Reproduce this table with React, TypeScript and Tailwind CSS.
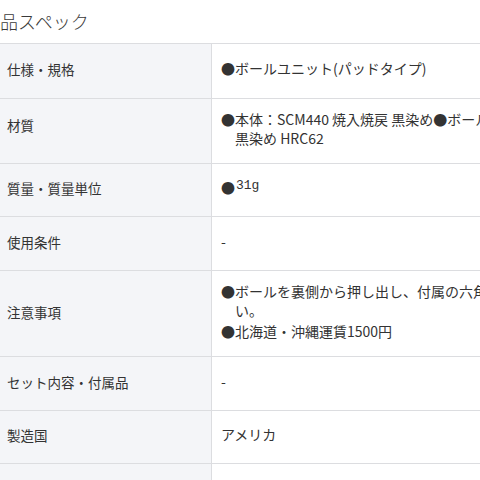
import React from "react";

const font = { fontFamily: '"Noto Sans CJK JP", "Noto Sans", sans-serif' };

function Row({
  label,
  children,
  h,
  lpb = "pb-[3px]",
}: {
  label: string;
  children: React.ReactNode;
  h: string;
  lpb?: string;
}) {
  return (
    <div className={`flex border-b border-[#dcdde0] ${h}`}>
      <div className={`w-[212px] shrink-0 bg-[#f4f5f8] border-r border-[#dcdde0] flex items-center pl-[7px] text-[13.5px] text-[#333] ${lpb}`}>
        {label}
      </div>
      <div className="flex-1 flex flex-col justify-center pl-[9px] pb-[5px] text-[14px] text-[#333] leading-[19px] whitespace-nowrap">
        {children}
      </div>
    </div>
  );
}

export default function App() {
  return (
    <div className="w-[480px] h-[480px] overflow-hidden bg-white" style={font}>
      <div className="w-[640px]">
        <div className="h-[43px] flex items-center -ml-[18px] text-[18px] text-[#3a3a3a] font-light">
          製品スペック
        </div>
        <div className="border-t border-[#dcdde0]">
          <Row label="仕様・規格" h="h-[55px]">
            <div>●ボールユニット(パッドタイプ)</div>
          </Row>
          <Row label="材質" h="h-[65px]" lpb="pb-[12px]">
            <div>●本体：SCM440 焼入焼戻 黒染め●ボール：SUJ2 焼入焼戻</div>
            <div className="pl-[14px]">黒染め HRC62</div>
          </Row>
          <Row label="質量・質量単位" h="h-[53px]">
            <div className="flex items-center">
              ●
              <span
                className="text-[13px] -mt-[5px] ml-[1px]"
                style={{ fontFamily: '"Liberation Mono", "DejaVu Sans Mono", monospace' }}
              >
                31g
              </span>
            </div>
          </Row>
          <Row label="使用条件" h="h-[54px]">
            <div>-</div>
          </Row>
          <Row label="注意事項" h="h-[86px]">
            <div>●ボールを裏側から押し出し、付属の六角レンチで交換してくださ</div>
            <div className="pl-[14px]">い。</div>
            <div className="mt-[2px]">●北海道・沖縄運賃1500円</div>
          </Row>
          <Row label="セット内容・付属品" h="h-[54px]">
            <div>-</div>
          </Row>
          <Row label="製造国" h="h-[53px]">
            <div>アメリカ</div>
          </Row>
          <Row label="" h="h-[54px]">
            <div></div>
          </Row>
        </div>
      </div>
    </div>
  );
}
